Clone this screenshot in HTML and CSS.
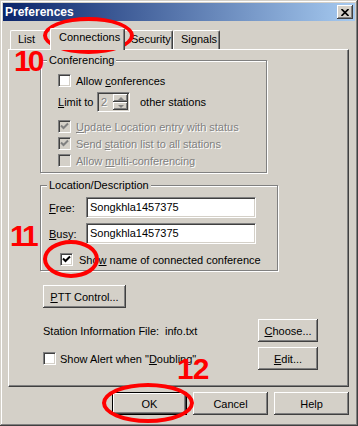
FILE: index.html
```html
<!DOCTYPE html>
<html lang="en">
<head>
  <meta charset="UTF-8" />
  <title>Preferences</title>
  <link rel="stylesheet" href="styles.css">
</head>
<body>
  <div class="window">
    <div class="titlebar">
      <span class="title">Preferences</span>
      <span class="close">
        <svg width="8" height="7" viewBox="0 0 8 7"><path d="M0.5 0 L7.5 7 M7.5 0 L0.5 7" stroke="#000" stroke-width="1.6"/></svg>
      </span>
    </div>

    <div class="content">
      <div class="tabs">
        <div class="tab tab-list">List</div>
        <div class="tab tab-conn active">Connections</div>
        <div class="tab tab-sec">Security</div>
        <div class="tab tab-sig">Signals</div>
      </div>

      <div class="panel">
        <fieldset class="group group-conf">
          <legend>Conferencing</legend>
          <div class="row">
            <span class="check"></span>
            <span>Allow <u>c</u>onferences</span>
          </div>
          <div class="row limit-row">
            <span class="limit-label"><u>L</u>imit to</span>
            <span class="spin">
              <span class="spin-value">2</span>
              <span class="spin-btns">
                <span class="spin-btn"><span class="arrow-up"></span></span>
                <span class="spin-btn"><span class="arrow-down"></span></span>
              </span>
            </span>
            <span class="limit-after">other stations</span>
          </div>
          <div class="row row-gap disabled">
            <span class="check checked"><svg viewBox="0 0 11 11"><path d="M2 4.5 L4.5 7 L9 2.5" fill="none" stroke="#808080" stroke-width="2"/></svg></span>
            <span><u>U</u>pdate Location entry with status</span>
          </div>
          <div class="row disabled">
            <span class="check checked"><svg viewBox="0 0 11 11"><path d="M2 4.5 L4.5 7 L9 2.5" fill="none" stroke="#808080" stroke-width="2"/></svg></span>
            <span>Send <u>s</u>tation list to all stations</span>
          </div>
          <div class="row disabled">
            <span class="check"></span>
            <span>Allow <u>m</u>ulti-conferencing</span>
          </div>
        </fieldset>

        <fieldset class="group group-loc">
          <legend>Location/Description</legend>
          <div class="field-row">
            <span class="field-label"><u>F</u>ree:</span>
            <span class="textbox">Songkhla1457375</span>
          </div>
          <div class="field-row field-busy">
            <span class="field-label"><u>B</u>usy:</span>
            <span class="textbox">Songkhla1457375</span>
          </div>
          <div class="row show-row">
            <span class="check checked"><svg viewBox="0 0 11 11"><path d="M2 4.5 L4.5 7 L9 2.5" fill="none" stroke="#000" stroke-width="2"/></svg></span>
            <span>Sho<u>w</u> name of connected conference</span>
          </div>
        </fieldset>

        <button class="btn btn-ptt"><u>P</u>TT Control...</button>

        <div class="line-row file-row">
          <span class="file-label">Station Information File:</span>
          <span>info.txt</span>
          <button class="btn btn-side"><u>C</u>hoose...</button>
        </div>

        <div class="line-row alert-row">
          <span class="check"></span>
          <span class="alert-text">Show Alert when "<u>D</u>oubling"</span>
          <button class="btn btn-side"><u>E</u>dit...</button>
        </div>
      </div>

      <div class="actions">
        <button class="btn btn-default">OK</button>
        <button class="btn">Cancel</button>
        <button class="btn">Help</button>
      </div>
    </div>

    <!-- red markup drawn over the dialog -->
    <div class="ring ring-tab"></div>
    <div class="ring ring-check"></div>
    <div class="ring ring-ok"></div>
    <div class="num num-10">10</div>
    <div class="num num-11">11</div>
    <div class="num num-12">12</div>
  </div>
</body>
</html>
```

FILE: styles.css
```css
body {
  margin: 0;
  background: #d4d0c8;
  font-family: "Liberation Sans", Arial, sans-serif;
  font-size: 11px;
  color: #000;
}

.window {
  position: relative;
  width: 358px;
  height: 426px;
  box-sizing: border-box;
  padding: 3px;
  background: #d4d0c8;
  box-shadow: inset -1px -1px #404040, inset 1px 1px #d4d0c8,
              inset -2px -2px #808080, inset 2px 2px #fff;
}

.titlebar {
  height: 18px;
  display: flex;
  align-items: center;
  justify-content: space-between;
  padding: 0 2px;
  background: linear-gradient(to right, #0a246a, #a6caf0);
  color: #fff;
}

.title {
  font-weight: bold;
  font-size: 12px;
}

.close {
  width: 16px;
  height: 14px;
  box-sizing: border-box;
  display: flex;
  align-items: center;
  justify-content: center;
  background: #d4d0c8;
  box-shadow: inset -1px -1px #404040, inset 1px 1px #fff, inset -2px -2px #808080;
}

.content {
  padding: 7px 6px 0 5px;
}

/* tabs */
.tabs {
  display: flex;
  align-items: flex-end;
  height: 21px;
  padding-left: 2px;
}

.tab {
  height: 19px;
  box-sizing: border-box;
  padding: 2px 0 0 7px;
  line-height: 13px;
  border-top: 1px solid #fff;
  border-left: 1px solid #fff;
  border-right: 1px solid #404040;
  border-radius: 2px 2px 0 0;
  box-shadow: inset -1px 0 #808080;
  background: #d4d0c8;
}

.tab-list { width: 42px; }
.tab-conn { width: 71px; }
.tab-sec { width: 50px; }
.tab-sig { width: 47px; }

.tab.active {
  position: relative;
  z-index: 2;
  width: 75px;
  height: 22px;
  margin: 0 -2px -1px;
  padding-left: 8px;
}

.panel {
  height: 338px;
  box-sizing: border-box;
  padding: 4px 0 0 31px;
  border-top: 1px solid #fff;
  border-left: 1px solid #fff;
  border-right: 1px solid #404040;
  border-bottom: 1px solid #404040;
  box-shadow: inset -1px -1px #808080;
}

/* group boxes */
.group {
  margin: 0;
  box-sizing: border-box;
  min-inline-size: 0;
  padding: 5px 6px 3px;
  border: 1px solid #808080;
  box-shadow: inset 1px 1px #fff, 1px 1px #fff;
}

.group legend {
  padding: 0 2px;
  line-height: 13px;
  background: #d4d0c8;
}

.group-conf { width: 227px; }

.group-loc {
  width: 238px;
  margin-top: 6px;
  padding-bottom: 2px;
}

.row {
  display: flex;
  align-items: center;
  gap: 5px;
  height: 17px;
  padding-left: 11px;
}

.row-gap { margin-top: 6px; }

.disabled {
  color: #808080;
  text-shadow: 1px 1px #fff;
}

.check {
  width: 13px;
  height: 13px;
  flex: none;
  box-sizing: border-box;
  background: #fff;
  border: 1px solid;
  border-color: #808080 #fff #fff #808080;
  box-shadow: inset 1px 1px #404040, inset -1px -1px #d4d0c8;
}

.check svg {
  display: block;
  width: 11px;
  height: 11px;
}

.disabled .check {
  background: #d4d0c8;
}

.limit-row {
  height: 20px;
  margin-top: 3px;
  gap: 0;
}

.limit-label { width: 39px; }

.spin {
  width: 33px;
  height: 20px;
  box-sizing: border-box;
  display: flex;
  border: 1px solid;
  border-color: #808080 #fff #fff #808080;
  box-shadow: inset 1px 1px #404040, inset -1px -1px #d4d0c8;
  padding: 1px;
}

.spin-value {
  flex: 1;
  padding: 2px 0 0 2px;
  line-height: 13px;
  color: #808080;
  text-shadow: 1px 1px #fff;
}

.spin-btns {
  width: 15px;
  display: flex;
  flex-direction: column;
}

.spin-btn {
  flex: 1;
  display: flex;
  align-items: center;
  justify-content: center;
  box-shadow: inset -1px -1px #404040, inset 1px 1px #fff, inset -2px -2px #808080;
}

.arrow-up,
.arrow-down {
  width: 0;
  height: 0;
  border-left: 3px solid transparent;
  border-right: 3px solid transparent;
}

.arrow-up { border-bottom: 3px solid #808080; }
.arrow-down { border-top: 3px solid #808080; }

.limit-after { margin-left: 10px; }

.field-row {
  display: flex;
  align-items: center;
  height: 21px;
}

.field-busy { margin-top: 5px; }

.field-label {
  width: 37px;
  padding-left: 2px;
}

.textbox {
  width: 170px;
  height: 21px;
  box-sizing: border-box;
  padding: 3px 0 0 3px;
  line-height: 13px;
  font-size: 11px;
  background: #fff;
  border: 1px solid;
  border-color: #808080 #fff #fff #808080;
  box-shadow: inset 1px 1px #404040, inset -1px -1px #d4d0c8;
}

.show-row {
  margin-top: 7px;
  padding-left: 13px;
  gap: 6px;
}

/* buttons */
.btn {
  height: 23px;
  box-sizing: border-box;
  padding: 0;
  border: none;
  background: #d4d0c8;
  font: 11px "Liberation Sans", Arial, sans-serif;
  color: #000;
  box-shadow: inset -1px -1px #404040, inset 1px 1px #fff, inset -2px -2px #808080;
}

.btn-ptt {
  display: block;
  width: 83px;
  margin: 14px 0 0 3px;
}

.line-row {
  display: flex;
  align-items: center;
  width: 275px;
  height: 23px;
  margin-left: 3px;
}

.file-row { margin-top: 11px; }
.alert-row { margin-top: 5px; }

.file-label { width: 122px; }

.alert-text { margin-left: 4px; }

.btn-side {
  width: 60px;
  margin-left: auto;
}

.actions {
  display: flex;
  justify-content: flex-end;
  gap: 6px;
  margin-top: 5px;
}

.actions .btn { width: 75px; }

.btn-default {
  box-shadow: inset 0 0 0 1px #000, inset -2px -2px #404040,
              inset 2px 2px #fff, inset -3px -3px #808080;
}

/* red annotations */
.ring {
  position: absolute;
  box-sizing: border-box;
  border: 4px solid #f00;
  border-radius: 50%;
}

.ring-tab { left: 43px; top: 17px; width: 91px; height: 37px; }
.ring-check { left: 43px; top: 240px; width: 56px; height: 38px; }
.ring-ok { left: 102px; top: 383px; width: 92px; height: 40px; }

.num {
  position: absolute;
  color: #f00;
  font: bold 30px/30px "Liberation Sans", Arial, sans-serif;
  letter-spacing: -3px;
}

.num-10 { left: 14px; top: 46px; }
.num-11 { left: 10px; top: 221px; }
.num-12 { left: 177px; top: 354px; letter-spacing: -1px; }
```
